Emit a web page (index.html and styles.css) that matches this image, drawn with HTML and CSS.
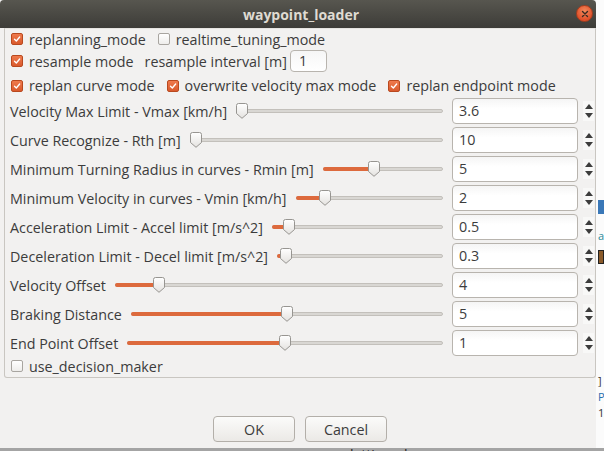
FILE: index.html
```html
<!DOCTYPE html>
<html>
<head>
<meta charset="utf-8">
<link rel="stylesheet" href="styles.css">
</head>
<body>
<div class="desktop">
  <div class="bg-bits">
    <span class="bit bit-blue b1"></span>
    <span class="bit bit-teal b2">a</span>
    <span class="bit bit-brown b3"></span>
    <span class="bit b4">]</span>
    <span class="bit bit-blue b5">P</span>
    <span class="bit b6">1</span>
    <span class="bottom-text">lattice_planner</span>
  </div>
  <div class="window">
    <div class="titlebar">
      <span class="title">waypoint_loader</span>
      <span class="close"><svg width="10" height="10" viewBox="0 0 10 10"><path d="M2.5 2.5 L7.5 7.5 M7.5 2.5 L2.5 7.5" stroke="#3a2a22" stroke-width="1.4" stroke-linecap="round"/></svg></span>
    </div>
    <div class="body">
      <div class="frame">
        <div class="row row-top">
          <label class="cb checked"><span class="box"><svg viewBox="0 0 12 12"><path d="M3 6.2 L5.2 8.4 L9.2 3.6" fill="none" stroke="#fff" stroke-width="1.6" stroke-linecap="round" stroke-linejoin="round"/></svg></span>replanning_mode</label>
          <label class="cb"><span class="box"></span>realtime_tuning_mode</label>
        </div>
        <div class="row row-mid">
          <label class="cb checked"><span class="box"><svg viewBox="0 0 12 12"><path d="M3 6.2 L5.2 8.4 L9.2 3.6" fill="none" stroke="#fff" stroke-width="1.6" stroke-linecap="round" stroke-linejoin="round"/></svg></span>resample mode</label>
          <span class="lbl interval">resample interval [m]</span>
          <span class="smallspin">1</span>
        </div>
        <div class="row row-third">
          <label class="cb checked"><span class="box"><svg viewBox="0 0 12 12"><path d="M3 6.2 L5.2 8.4 L9.2 3.6" fill="none" stroke="#fff" stroke-width="1.6" stroke-linecap="round" stroke-linejoin="round"/></svg></span>replan curve mode</label>
          <label class="cb checked"><span class="box"><svg viewBox="0 0 12 12"><path d="M3 6.2 L5.2 8.4 L9.2 3.6" fill="none" stroke="#fff" stroke-width="1.6" stroke-linecap="round" stroke-linejoin="round"/></svg></span>overwrite velocity max mode</label>
          <label class="cb checked"><span class="box"><svg viewBox="0 0 12 12"><path d="M3 6.2 L5.2 8.4 L9.2 3.6" fill="none" stroke="#fff" stroke-width="1.6" stroke-linecap="round" stroke-linejoin="round"/></svg></span>replan endpoint mode</label>
        </div>
        <div class="sliders">
          <div class="srow"><span class="lbl">Velocity Max Limit - Vmax [km/h]</span><div class="slider" style="--v:0%"><div class="track"></div><div class="fill"></div><div class="handle"></div></div><div class="spin">3.6</div><div class="arrows"><i class="up"></i><i class="down"></i></div></div>
          <div class="srow"><span class="lbl">Curve Recognize - Rth [m]</span><div class="slider" style="--v:0%"><div class="track"></div><div class="fill"></div><div class="handle"></div></div><div class="spin">10</div><div class="arrows"><i class="up"></i><i class="down"></i></div></div>
          <div class="srow"><span class="lbl">Minimum Turning Radius in curves - Rmin [m]</span><div class="slider" style="--v:42%"><div class="track"></div><div class="fill"></div><div class="handle"></div></div><div class="spin">5</div><div class="arrows"><i class="up"></i><i class="down"></i></div></div>
          <div class="srow"><span class="lbl">Minimum Velocity in curves - Vmin [km/h]</span><div class="slider" style="--v:17%"><div class="track"></div><div class="fill"></div><div class="handle"></div></div><div class="spin">2</div><div class="arrows"><i class="up"></i><i class="down"></i></div></div>
          <div class="srow"><span class="lbl">Acceleration Limit - Accel limit [m/s^2]</span><div class="slider" style="--v:7%"><div class="track"></div><div class="fill"></div><div class="handle"></div></div><div class="spin">0.5</div><div class="arrows"><i class="up"></i><i class="down"></i></div></div>
          <div class="srow"><span class="lbl">Deceleration Limit - Decel limit [m/s^2]</span><div class="slider" style="--v:2%"><div class="track"></div><div class="fill"></div><div class="handle"></div></div><div class="spin">0.3</div><div class="arrows"><i class="up"></i><i class="down"></i></div></div>
          <div class="srow"><span class="lbl">Velocity Offset</span><div class="slider" style="--v:12%"><div class="track"></div><div class="fill"></div><div class="handle"></div></div><div class="spin">4</div><div class="arrows"><i class="up"></i><i class="down"></i></div></div>
          <div class="srow"><span class="lbl">Braking Distance</span><div class="slider" style="--v:50%"><div class="track"></div><div class="fill"></div><div class="handle"></div></div><div class="spin">5</div><div class="arrows"><i class="up"></i><i class="down"></i></div></div>
          <div class="srow"><span class="lbl">End Point Offset</span><div class="slider" style="--v:50%"><div class="track"></div><div class="fill"></div><div class="handle"></div></div><div class="spin">1</div><div class="arrows"><i class="up"></i><i class="down"></i></div></div>
        </div>
        <div class="row row-last">
          <label class="cb"><span class="box"></span>use_decision_maker</label>
        </div>
      </div>
      <div class="buttons">
        <button class="btn">OK</button>
        <button class="btn">Cancel</button>
      </div>
    </div>
  </div>
</div>
</body>
</html>
```

FILE: styles.css
```css
* { box-sizing: border-box; }
html, body { margin: 0; padding: 0; }
body {
  width: 604px;
  height: 451px;
  overflow: hidden;
  font-family: "Open Sans", "DejaVu Sans", sans-serif;
  font-size: 14.3px;
  color: #3c3c3c;
}
.desktop {
  position: relative;
  width: 604px;
  height: 451px;
  background: #fbfbfb;
}
.bg-bits {
  position: absolute;
  inset: 0;
}
.bit {
  position: absolute;
  left: 598px;
  font-size: 11px;
  line-height: 12px;
  color: #333;
}
.bit-blue { color: #2a6fb0; }
.bit-teal { color: #2b8a9a; }
.b1 { top: 200px; width: 6px; height: 14px; background: #3a78b8; }
.b2 { top: 230px; }
.b3 { top: 250px; width: 6px; height: 14px; background: #8a5a2a; border: 1px solid #222; }
.b4 { top: 375px; }
.b5 { top: 391px; }
.b6 { top: 407px; }
.bottom-text {
  position: absolute;
  left: 0;
  right: 0;
  top: 448px;
  height: 3px;
  background: #a4a4a4;
  overflow: hidden;
  padding-left: 350px;
  font-size: 14px;
  line-height: 14px;
  color: #222;
}
.window {
  position: absolute;
  left: 0;
  top: 0;
  width: 596px;
  height: 448px;
  display: flex;
  flex-direction: column;
  background: #f2f1f0;
}
.titlebar {
  height: 28px;
  flex: none;
  background: linear-gradient(#57564f, #3d3c38);
  display: flex;
  align-items: center;
  justify-content: center;
  position: relative;
  border-radius: 4px 4px 0 0;
}
.title {
  color: #dfdbd2;
  font-weight: bold;
  font-size: 14px;
  padding-left: 6px;
}
.close {
  position: absolute;
  right: 3px;
  top: 5px;
  width: 17px;
  height: 17px;
  border-radius: 50%;
  background: radial-gradient(circle at 50% 35%, #f38a5c, #e0502a 70%);
  border: 1px solid #a83d1d;
  display: flex;
  align-items: center;
  justify-content: center;
}
.close svg { display: block; }
.body {
  flex: 1;
  display: flex;
  flex-direction: column;
}
.frame {
  margin-left: 4px;
  border: 1px solid #c9c6c1;
  border-top-color: #e6e4e1;
  border-radius: 0 0 3px 3px;
  padding: 0 1px 0 5px;
  display: flex;
  flex-direction: column;
  height: 350px;
}
.row {
  display: flex;
  align-items: center;
}
.row-top { height: 20px; }
.row-mid { height: 24px; }
.row-third { height: 25px; }
.row-last { height: 20px; }
.cb {
  display: flex;
  align-items: center;
  margin-right: 11px;
  white-space: nowrap;
}
.box {
  width: 12px;
  height: 12px;
  margin: 0 6px 0 1px;
  border: 1px solid #a8a5a0;
  border-radius: 2px;
  background: linear-gradient(#ffffff, #eeedeb);
  display: block;
  flex: none;
}
.checked .box {
  border-color: #b9491f;
  background: linear-gradient(#ef7a4d, #d95a2d);
}
.box svg { display: block; width: 10px; height: 10px; }
.interval { margin-right: 3px; }
.smallspin {
  width: 37px;
  height: 22px;
  border: 1px solid #b8b4ae;
  border-radius: 4px;
  background: linear-gradient(#f6f6f6, #ffffff);
  padding-left: 8px;
  line-height: 20px;
}
.sliders {
  display: flex;
  flex-direction: column;
  gap: 3px;
}
.srow {
  height: 26px;
  display: flex;
  align-items: center;
}
.lbl { white-space: nowrap; flex: none; }
.slider {
  flex: 1;
  margin: 0 9px;
  height: 26px;
  position: relative;
}
.track {
  position: absolute;
  left: 0;
  right: 0;
  top: 11px;
  height: 4px;
  border-radius: 2px;
  background: #d9d7d3;
  border: 1px solid #c3c0bb;
}
.fill {
  position: absolute;
  left: 0;
  top: 11px;
  height: 4px;
  border-radius: 2px;
  background: #dd6a3d;
  width: calc(6px + (100% - 12px) * var(--v) / 100%);
}
.handle {
  position: absolute;
  top: 5px;
  left: calc((100% - 12px) * var(--v) / 100%);
  width: 12px;
  height: 16px;
  background: url("data:image/svg+xml;utf8,<svg xmlns='http://www.w3.org/2000/svg' width='12' height='16' viewBox='0 0 12 16'><defs><linearGradient id='g' x1='0' y1='0' x2='0' y2='1'><stop offset='0' stop-color='%23ffffff'/><stop offset='1' stop-color='%23e4e2df'/></linearGradient></defs><path d='M0.5 2.5 Q0.5 0.5 2.5 0.5 L9.5 0.5 Q11.5 0.5 11.5 2.5 L11.5 10.5 L6 15.3 L0.5 10.5 Z' fill='url(%23g)' stroke='%23979591' stroke-width='1'/></svg>") no-repeat;
}
.spin {
  width: 126px;
  height: 26px;
  flex: none;
  border: 1px solid #b8b4ae;
  border-radius: 4px;
  background: linear-gradient(#f5f5f5, #ffffff 40%);
  padding-left: 6px;
  line-height: 24px;
}
.arrows {
  width: 11px;
  height: 20px;
  margin-left: 5px;
  flex: none;
  display: flex;
  flex-direction: column;
  justify-content: space-between;
  align-items: center;
  padding: 3px 0;
  background: #f8f8f7;
}
.arrows i {
  display: block;
  width: 0;
  height: 0;
  border-left: 4px solid transparent;
  border-right: 4px solid transparent;
}
.arrows .up { border-bottom: 5px solid #3c3c3c; }
.arrows .down { border-top: 5px solid #3c3c3c; }
.buttons {
  margin-top: auto;
  display: flex;
  justify-content: center;
  gap: 10px;
  padding: 0 0 6px 4px;
}
.btn {
  width: 82px;
  height: 26px;
  font-family: inherit;
  font-size: 14.3px;
  color: #3c3c3c;
  border: 1px solid #b3afa9;
  border-radius: 4px;
  background: linear-gradient(#fbfbfa, #ebe9e6);
  padding: 0;
}
```
